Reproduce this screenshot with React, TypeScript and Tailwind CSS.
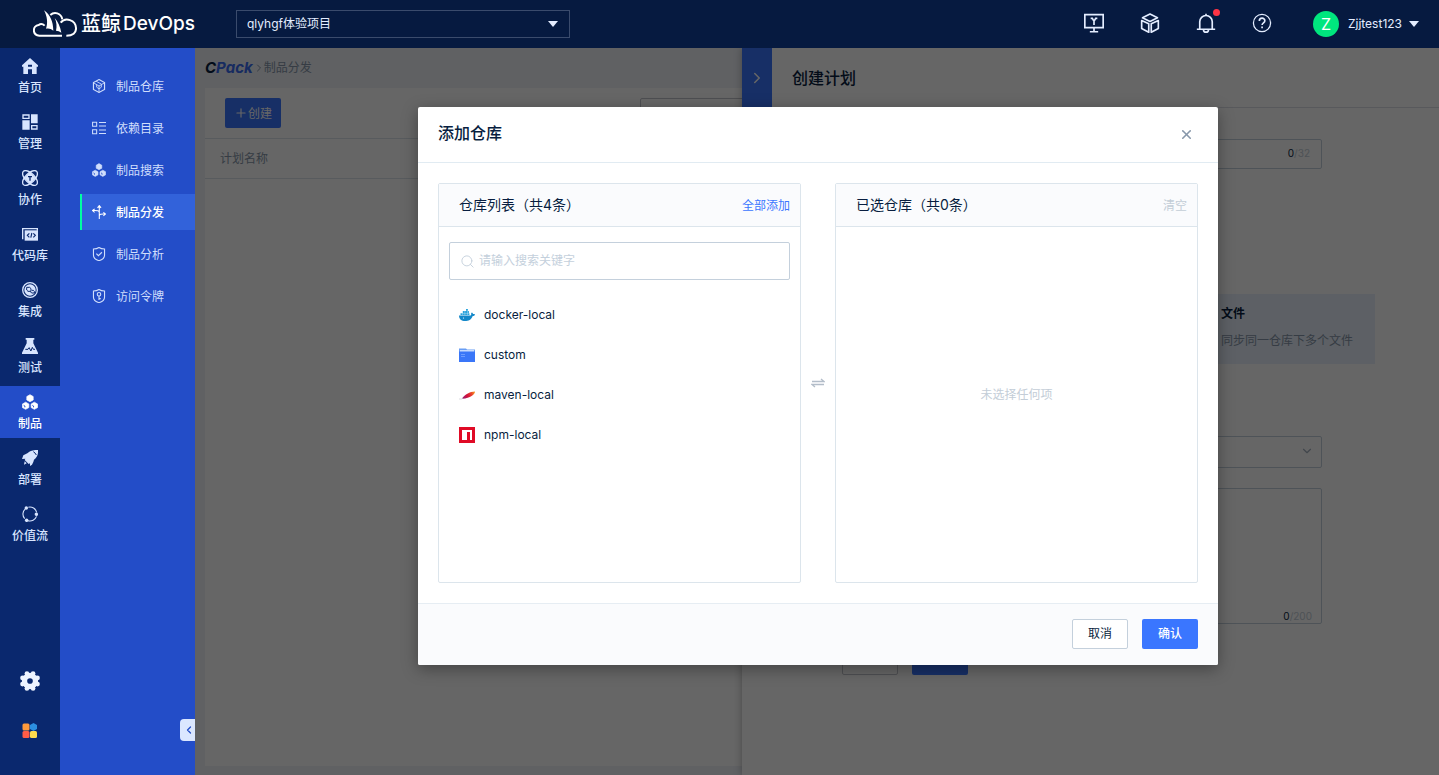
import { useState } from 'react';
import type { ReactNode } from 'react';
import clsx from 'clsx';
import { ChevronDown, ChevronLeft, ChevronRight, Plus, Search, X } from 'lucide-react';

function Svg({ size = 16, box = 24, className, children }: { size?: number; box?: number; className?: string; children: ReactNode }) {
  return (
    <svg width={size} height={size} viewBox={`0 0 ${box} ${box}`} fill="none" stroke="currentColor" strokeWidth={1.5} className={className} aria-hidden="true">
      {children}
    </svg>
  );
}

/* Three hexagons, shared by the main nav and the sub menu */
const hexagons = (
  <g>
    <g fill="currentColor" strokeWidth={1} strokeLinejoin="round">
      <path d="M12 1l4.800 2.800v5.200L12 11.500 7.200 9V3.800z" />
      <path d="M5.500 12.300l4.800 2.800v5.200l-4.800 2.700-4.900-2.700v-5.200z" />
      <path d="M18.500 12.300l4.900 2.800v5.200l-4.900 2.700-4.800-2.700v-5.200z" />
    </g>
    <path stroke="#234dc8" strokeWidth={1.4} d="M2.500 17l1.800 1v2M15.500 17l1.800 1v2" />
  </g>
);

const mainNav = [
  {
    name: '首页',
    icon: <path fill="currentColor" stroke="none" fillRule="evenodd" d="M12 0L24 11v2h-2v11h-7v-7H9v7H2V13H0v-2zM9 10v3h6v-3z" />,
  },
  {
    name: '管理',
    icon: (
      <g>
        <path strokeWidth={2} d="M1.500 1.500h9v5h-9zM14.500 17.500h8v5h-8z" />
        <path fill="currentColor" stroke="none" d="M13.500.5h10v13.500h-10zM.5 9.500h11v14H.5z" />
      </g>
    ),
  },
  {
    name: '协作',
    icon: (
      <g>
        <ellipse cx="12" cy="12" rx="14" ry="7" transform="rotate(45 12 12)" strokeWidth={2} />
        <ellipse cx="12" cy="12" rx="14" ry="7" transform="rotate(-45 12 12)" strokeWidth={2} />
        <path fill="currentColor" stroke="none" d="M12 3l8.500 9-8.500 9-8.500-9z" />
        <path stroke="#0a286e" strokeWidth={2} d="M9 10h6M12 10v6" />
      </g>
    ),
  },
  {
    name: '代码库',
    icon: (
      <g>
        <path strokeWidth={2} d="M1 20V4h22v3" />
        <path fill="currentColor" stroke="none" d="M4 6.500h20V22H4z" />
        <path stroke="#0a286e" strokeWidth={1.7} d="M11 11l-3 3 3 3M17 11l3 3-3 3M14.800 10.500l-1.600 7" />
      </g>
    ),
  },
  {
    name: '集成',
    icon: (
      <g>
        <circle cx="12" cy="12" r="11" strokeWidth={2} />
        <circle cx="12" cy="12" r="8.500" fill="currentColor" stroke="none" />
        <path stroke="#0a286e" strokeWidth={1.500} d="M7 8h4.500l2 2v4H9l-2-2zM15 12.500h2l1.500 1.500v2.500h-4L13 15" />
      </g>
    ),
  },
  {
    name: '测试',
    icon: (
      <g>
        <path fill="currentColor" stroke="none" d="M5.500 0h13v2.500H17V8l7 14v2H0v-2L7 8V2.500H5.500z" />
        <path stroke="#0a286e" strokeWidth={1.500} d="M5 17h4l1.800-2.500 2.500 5L15.500 14l1.500 3h2.500" />
      </g>
    ),
  },
  { name: '制品', icon: hexagons },
  {
    name: '部署',
    icon: (
      <g fill="currentColor" stroke="none">
        <path d="M24 0c.5 6-1 11-6 14.500L17 18l-2 4-3 2v-4l-2 1-6-6 1-2-5 .5 2-5.500 6-3 3-2.500C13.500 1 18 0 24 0z" />
        <path d="M4 17l3 3-4 2z" />
        <path stroke="#0a286e" strokeWidth={1.500} fill="none" d="M17 2.500c2 1 3.500 3 4.500 5" />
      </g>
    ),
  },
  {
    name: '价值流',
    icon: (
      <g>
        <path strokeWidth={1.600} d="M4 19A10.500 10.500 0 0 1 5 4.200M9.500 1.800A10.500 10.500 0 0 1 22 9.500M21.800 15.500A10.500 10.500 0 0 1 9 22" />
        <circle cx="6.500" cy="3" r="2.600" fill="currentColor" stroke="none" />
        <circle cx="21.500" cy="12.500" r="2.600" fill="currentColor" stroke="none" />
        <circle cx="7" cy="21.500" r="2.600" fill="currentColor" stroke="none" />
      </g>
    ),
  },
];

const subNav = [
  {
    name: '制品仓库',
    icon: (
      <g>
        <path strokeWidth={2} d="M12 1l9.500 5v12L12 23l-9.500-5V6z" />
        <path d="M2.500 6.500L12 12l9.500-5.500M12 12v11M8 10v4l4 3 4-3v-4M7 3.800L16.500 9" />
      </g>
    ),
  },
  {
    name: '依赖目录',
    icon: <path strokeWidth={1.800} d="M1 2h7v7H1zM1 15h7v7H1zM12 2.500h12M12 8.500h12M12 15.500h12M12 21.500h12" />,
  },
  { name: '制品搜索', icon: hexagons },
  {
    name: '制品分发',
    icon: (
      <g strokeWidth={1.800}>
        <path d="M12.500 24V2M9.500 5l3-4 3 4M12.500 13c0-4-4-3.500-11-3.500M4.500 6.500l-3.500 3 3.500 3M12.500 19c0-4 4-3.500 10-3.500M19.500 12.500l3.500 3-3.500 3" />
      </g>
    ),
  },
  {
    name: '制品分析',
    icon: <path strokeWidth={1.900} d="M12 1c3 2 6 2.500 9.500 2.500V14c0 5-4.500 8-9.500 9.500C7 22 2.500 19 2.500 14V3.500C6 3.500 9 3 12 1zM7.500 11.500l3.500 3.500 6-6" />,
  },
  {
    name: '访问令牌',
    icon: (
      <g strokeWidth={1.900}>
        <path d="M12 1c3 2 6 2.500 9.500 2.500V14c0 5-4.500 8-9.500 9.500C7 22 2.500 19 2.500 14V3.500C6 3.500 9 3 12 1z" />
        <circle cx="12" cy="9" r="3" />
        <path d="M12 12v7M12 16.500h3" />
      </g>
    ),
  },
];

const headerTools = [
  {
    name: '控制台',
    icon: (
      <g strokeWidth={2}>
        <path d="M1 2h22v15.500H1zM12 17.500v4.500M7 22.500h10" />
        <path d="M8 6.500h2l2 3.500 2-3.500h2M12 10v4.500" />
      </g>
    ),
  },
  {
    name: '服务',
    icon: (
      <g strokeWidth={2} strokeLinejoin="round">
        <path d="M12 1.200l9 4.500-9 4.500-9-4.500z" />
        <path d="M2 9l8.500 4v10L2 18.500zM22 9l-8.500 4v10l8.500-4.500z" />
      </g>
    ),
  },
  {
    name: '通知',
    icon: (
      <g strokeWidth={2}>
        <path d="M4.500 19V10.500a7.500 7.500 0 0 1 15 0V19M1 19.500h22M12 3V1" />
        <path d="M9 20a3 3 0 0 0 6 0" />
      </g>
    ),
    dot: true,
  },
  {
    name: '帮助',
    icon: (
      <g>
        <circle cx="12" cy="12" r="10.300" />
        <path strokeWidth={2} d="M8.800 9.500c0-4.300 6.600-4.300 6.600-.3 0 2.600-3.300 2.500-3.300 5.300M12.100 16.200v2" />
      </g>
    ),
  },
];

const repos = [
  {
    name: 'docker-local',
    icon: (
      <Svg box={16}>
        <g stroke="none">
          <path fill="#1488c9" d="M0 8.500h11.500c.6-.2 1-1 .6-2.300l.8-.7c.6.3 1 .8 1.100 1.500.8-.1 1.500 0 2 .4-.4 1-1.200 1.500-2.300 1.500C12.500 12.500 9.500 14 6 14c-3.500 0-6-1.800-6-5.500z" />
          <path fill="#2aa3dc" d="M1.500 6.200h2v1.900h-2zM3.800 6.200h2v1.900h-2zM6.100 6.200h2v1.900h-2zM8.400 6.200h2v1.900h-2zM3.800 4h2v1.900h-2zM6.100 4h2v1.900h-2zM8.400 4h1.500v1.900H8.400zM7 2h1.900v1.800H7z" />
          <circle cx="4.500" cy="11" r="0.600" fill="#fff" />
        </g>
      </Svg>
    ),
  },
  {
    name: 'custom',
    icon: (
      <Svg box={16}>
        <g stroke="none">
          <path fill="#699df4" d="M0 1.500h7l1 1h8V6H0z" />
          <path fill="#c6dafd" d="M1 3h14v2H1z" />
          <path fill="#3a76f8" d="M0 4.500h16V15H0z" />
          <path fill="#6b9bff" d="M2 7h4v1H2zM2 9h4v1H2z" />
        </g>
      </Svg>
    ),
  },
  {
    name: 'maven-local',
    icon: (
      <Svg box={16}>
        <defs>
          <linearGradient id="feather" x1="2" y1="12" x2="16" y2="5" gradientUnits="userSpaceOnUse">
            <stop offset="0" stopColor="#7b2a8c" />
            <stop offset=".45" stopColor="#d3103b" />
            <stop offset=".75" stopColor="#e8432b" />
            <stop offset="1" stopColor="#f7a01d" />
          </linearGradient>
        </defs>
        <path stroke="none" fill="url(#feather)" d="M3 11.500C5 8 11 4.500 16 4.500c0 3-5 6.500-12.500 7.300z" />
        <path stroke="#c5c2cc" strokeWidth={0.6} d="M0 12h3l1-.8" />
      </Svg>
    ),
  },
  {
    name: 'npm-local',
    icon: (
      <Svg box={16}>
        <path stroke="none" fill="#e00b26" d="M0 0h16v16H0z" />
        <path stroke="none" fill="#fff" d="M3 3h10v10h-2V5H8v8H3z" />
      </Svg>
    ),
  },
];

function Caret() {
  return (
    <svg width="10" height="6" viewBox="0 0 10 6" fill="currentColor" aria-hidden="true">
      <path d="M0 0h10L5 6z" />
    </svg>
  );
}

function Header() {
  return (
    <header className="flex h-12 shrink-0 items-center bg-[#061a40] pr-5 pl-[33px] text-[#e4edff]">
      <a href="#home" className="flex w-[203px] items-center gap-1 text-white">
        <svg width="44" height="28" viewBox="0 0 132 84" fill="none" stroke="currentColor" strokeWidth="6" aria-hidden="true">
          <path d="M87 77H19C-3 75-2 47 17 45c6-5 12-4 18 2" />
          <path fill="currentColor" stroke="none" d="M33 1c19 14 27 33 28 61-7-6-14-8-22-6 6-16 4-37-6-55z" />
          <path fill="currentColor" stroke="none" d="M65 24c9 10 17 26 20 44-5-4-10-6-16-6 3-12 2-26-4-38z" />
          <path d="M52 15c12-11 32-6 36 13" />
          <path d="M83 38c14-18 45-8 46 16 1 15-10 23-29 23" />
        </svg>
        <span className="flex items-center gap-0.5 font-medium">
          <span className="text-xl">蓝鲸</span>
          <span className="text-[19px]">DevOps</span>
        </span>
      </a>
      <div className="relative w-[334px]">
        <select aria-label="项目" className="block h-7 w-full appearance-none border border-[#3a4b6c] bg-transparent px-2.5 text-xs">
          <option>qlyhgf体验项目</option>
        </select>
        <span className="pointer-events-none absolute top-[11px] right-3">
          <Caret />
        </span>
      </div>
      <div className="ml-auto flex items-center">
        {headerTools.map((tool) => (
          <button key={tool.name} type="button" aria-label={tool.name} className="flex h-12 w-14 items-center justify-center">
            <span className="relative -mt-0.5">
              <Svg size={20}>{tool.icon}</Svg>
              {tool.dot && <i className="absolute -top-1 -right-1 size-[7px] rounded-full bg-[#ff3445]" />}
            </span>
          </button>
        ))}
        <button type="button" className="ml-[23px] flex items-center text-xs">
          <span className="mr-[9px] flex size-[26px] items-center justify-center rounded-full bg-[#00e67e] text-base text-white">Z</span>
          Zjjtest123
          <span className="ml-[7px]">
            <Caret />
          </span>
        </button>
      </div>
    </header>
  );
}

function MainNav() {
  return (
    <nav className="flex w-15 shrink-0 flex-col gap-1 bg-[#0a286e] pt-0.5 text-xs font-medium text-[#d8e5ff]">
      {mainNav.map((item) => (
        <a
          key={item.name}
          href="#nav"
          className={clsx('flex h-13 flex-col items-center gap-1 pt-2', item.name === '制品' && 'bg-[#234dc8] text-white')}
        >
          <Svg>{item.icon}</Svg>
          <span className="leading-5">{item.name}</span>
        </a>
      ))}
      <div className="mt-auto flex flex-col items-center gap-8 pb-9 text-[#eef4ff]">
        <button type="button" aria-label="设置">
          <Svg size={20}>
            <g fill="currentColor" stroke="none">
              <circle cx="12" cy="12" r="9.800" />
              <circle cx="8.300" cy="3" r="2.800" />
              <circle cx="15.700" cy="3" r="2.800" />
              <circle cx="21" cy="8.300" r="2.800" />
              <circle cx="21" cy="15.700" r="2.800" />
              <circle cx="15.700" cy="21" r="2.800" />
              <circle cx="8.300" cy="21" r="2.800" />
              <circle cx="3" cy="15.700" r="2.800" />
              <circle cx="3" cy="8.300" r="2.800" />
              <circle cx="12" cy="12" r="3.400" fill="#0a286e" />
            </g>
          </Svg>
        </button>
        <button type="button" aria-label="应用">
          <Svg size={16} box={16}>
            <g stroke="none">
              <rect x="0.500" y="0.500" width="7" height="7" rx="1.500" fill="#ff9a3c" />
              <path fill="#2c8fe0" d="M11.500 0L15 2v4l-3.500 2L8 6V2z" />
              <rect x="0.500" y="8" width="7" height="7" rx="1.500" fill="#ff5c47" />
              <rect x="8" y="8" width="7" height="7" rx="1.500" fill="#ffdb4d" />
            </g>
          </Svg>
        </button>
      </div>
    </nav>
  );
}

function SubNav() {
  return (
    <nav className="relative flex w-[135px] shrink-0 flex-col gap-1.5 bg-[#234dc8] pt-5 pl-5 text-xs text-[#d0defc]">
      {subNav.map((item) => (
        <a
          key={item.name}
          href="#sub"
          className={clsx(
            'flex h-9 items-center gap-2.5 border-l-2 pl-2.5',
            item.name === '制品分发' ? 'border-[#00ffa2] bg-[#3262da] font-medium text-white' : 'border-transparent',
          )}
        >
          <Svg size={14}>{item.icon}</Svg>
          <span className="pt-0.5">{item.name}</span>
        </a>
      ))}
      <button type="button" aria-label="收起" className="absolute right-0 bottom-[34px] flex h-[22px] w-[15px] items-center justify-center rounded-l bg-[#dbe7ff] pl-0.5 text-[#234dc8]">
        <ChevronLeft size={12} strokeWidth={2.5} />
      </button>
    </nav>
  );
}

function PlanList() {
  return (
    <div className="flex h-full flex-col bg-[#eff2f8] px-2.5 pb-[9px]">
      <div className="flex h-10 items-center text-xs text-[#8797aa]">
        <span className="text-[15px] font-bold text-[#3a6cf0] italic">
          <span className="text-[#081e40]">C</span>Pack
        </span>
        <ChevronRight size={12} className="-mr-px" />
        <span>制品分发</span>
      </div>
      <div className="flex-1 bg-white">
        <div className="flex justify-between px-5 py-2.5">
          <button type="button" className="flex h-[30px] w-14 items-center justify-center rounded-xs bg-[#3a76ff] text-xs text-white">
            <Plus size={14} strokeWidth={2} />
            <span className="pt-0.5">创建</span>
          </button>
          <div className="flex gap-2.5">
            <input aria-label="计划名称" className="h-[30px] w-[249px] rounded-xs border border-[#c4c6cc] px-2.5" />
            <input aria-label="执行状态" className="h-[30px] w-[250px] rounded-xs border border-[#c4c6cc] px-2.5" />
            <input aria-label="启用状态" className="h-[30px] w-[250px] rounded-xs border border-[#c4c6cc] px-2.5" />
          </div>
        </div>
        <table className="w-full text-left text-xs text-[#8797aa]">
          <thead>
            <tr>
              <th className="h-10 border-y border-[#dde4eb] px-[15px] font-normal">计划名称</th>
            </tr>
          </thead>
        </table>
      </div>
    </div>
  );
}

function PlanDrawer() {
  return (
    <section className="absolute inset-y-0 right-0 w-[697px] bg-white shadow-[0_0_8px_rgba(0,0,0,0.3)]">
      <div className="flex h-15 items-center border-b border-[#dcdee5]">
        <button type="button" aria-label="关闭" className="flex h-full w-[30px] items-center justify-center bg-[#3a76ff] text-white">
          <ChevronRight size={18} />
        </button>
        <h2 className="ml-5 text-base font-medium text-[#081e40]">创建计划</h2>
      </div>
      <form className="pt-[31px] pr-16 pl-[100px] text-xs text-[#081e40]">
        <div className="relative w-[480px]">
          <input aria-label="计划名称" className="block h-[30px] w-full rounded-xs border border-[#c4d0dc] px-2.5" />
          <span className="absolute top-2 right-3 text-[10px] leading-3">
            0<span className="text-[#c3cdd7]">/32</span>
          </span>
        </div>
        <div className="mt-[125px] grid grid-cols-3 gap-2.5">
          <div className="h-[70px] bg-[#e8f0fc]" />
          <div className="h-[70px] bg-[#e8f0fc]" />
          <div className="flex h-[70px] flex-col gap-2 bg-[#e8f0fc] pt-2.5 pl-[17px]">
            <strong className="leading-5 font-bold">文件</strong>
            <span className="leading-[18px] whitespace-nowrap text-[#8797aa]">同步同一仓库下多个文件</span>
          </div>
        </div>
        <div className="relative mt-[72px] w-[480px]">
          <select aria-label="冲突策略" className="block h-8 w-full appearance-none rounded-xs border border-[#c4d0dc]" />
          <ChevronDown size={14} strokeWidth={2} className="pointer-events-none absolute top-2 right-2 text-[#a3afbd]" />
        </div>
        <div className="relative mt-5 w-[480px]">
          <textarea aria-label="描述" className="block h-[136px] w-full resize-none rounded-xs border border-[#c4d0dc]" />
          <span className="absolute right-2.5 bottom-0.5 text-[10px] leading-3">
            0<span className="text-[#c3cdd7]">/200</span>
          </span>
        </div>
        <div className="mt-[21px] flex gap-3.5">
          <button type="button" aria-label="取消" className="h-[30px] w-14 rounded-xs border border-[#c4c6cc]" />
          <button type="button" aria-label="保存" className="h-[30px] w-14 rounded-xs bg-[#3a76ff]" />
        </div>
      </form>
    </section>
  );
}

function Panel({ title, action, disabled, onAction, children }: { title: string; action: string; disabled?: boolean; onAction: () => void; children: ReactNode }) {
  return (
    <section className="flex h-100 flex-1 flex-col rounded-xs border border-[#dce5ec]">
      <div className="flex h-[43px] items-center justify-between border-b border-[#dce5ec] bg-[#fafbfd] pr-2.5 pl-5">
        <h3 className="text-sm">{title}</h3>
        <button type="button" disabled={disabled} onClick={onAction} className="pt-0.5 text-xs text-[#3a76ff] disabled:text-[#c3cdd7]">
          {action}
        </button>
      </div>
      {children}
    </section>
  );
}

function RepoDialog() {
  const [picked, setPicked] = useState<string[]>([]);
  const [keyword, setKeyword] = useState('');

  const rows = (list: typeof repos, onPick: (name: string) => void) => (
    <ul className="pt-[15px] text-xs">
      {list.map((repo) => (
        <li key={repo.name}>
          <button type="button" onClick={() => onPick(repo.name)} className="flex h-10 w-full items-center gap-[9px] px-5">
            {repo.icon}
            {repo.name}
          </button>
        </li>
      ))}
    </ul>
  );

  const rest = repos.filter((repo) => !picked.includes(repo.name));
  const chosen = repos.filter((repo) => picked.includes(repo.name));

  return (
    <div role="dialog" aria-label="添加仓库" className="w-[800px] rounded-xs bg-white text-[#081e40] shadow-[0_4px_16px_rgba(0,0,0,0.35)]">
      <div className="flex h-14 items-center justify-between border-b border-[#e1ebf2] px-5">
        <h2 className="pb-1 text-base font-medium">添加仓库</h2>
        <button type="button" aria-label="关闭" className="px-1 text-[#8797aa]">
          <X size={15} strokeWidth={2.5} />
        </button>
      </div>
      <div className="flex items-center p-5">
        <Panel title={`仓库列表（共${rest.length}条）`} action="全部添加" onAction={() => setPicked(repos.map((repo) => repo.name))}>
          <label className="mx-2.5 mt-[15px] flex h-[38px] items-center gap-1 rounded-xs border border-[#c4d0dc] px-2.5 text-[#c4d0dc]">
            <Search size={15} strokeWidth={1.5} />
            <input
              value={keyword}
              onChange={(e) => setKeyword(e.target.value)}
              placeholder="请输入搜索关键字"
              className="min-w-0 flex-1 text-xs text-[#081e40] outline-none placeholder:text-[#c4d0dc]"
            />
          </label>
          {rows(rest.filter((repo) => repo.name.includes(keyword)), (name) => setPicked([...picked, name]))}
        </Panel>
        <div className="flex w-[34px] justify-center text-[#b3bdc9]">
          <Svg size={14} box={14}>
            <path d="M1 5.500h12L10 3M13 8.500H1L4 11" strokeWidth={1.300} />
          </Svg>
        </div>
        <Panel title={`已选仓库（共${chosen.length}条）`} action="清空" disabled={!chosen.length} onAction={() => setPicked([])}>
          {chosen.length ? (
            rows(chosen, (name) => setPicked(picked.filter((p) => p !== name)))
          ) : (
            <p className="flex flex-1 items-center justify-center pb-5 text-xs text-[#c3cdd7]">未选择任何项</p>
          )}
        </Panel>
      </div>
      <div className="flex justify-end gap-3.5 rounded-b-xs border-t border-[#e6edf3] bg-[#fafbfd] px-5 pt-[15px] pb-4 text-xs">
        <button type="button" className="h-[30px] w-14 rounded-xs border border-[#c4d0dc] bg-white">
          取消
        </button>
        <button type="button" className="h-[30px] w-14 rounded-xs bg-[#3a76ff] font-medium text-white">
          确认
        </button>
      </div>
    </div>
  );
}

export default function App() {
  return (
    <div className="flex h-screen flex-col font-[Inter,'Noto_Sans_CJK_SC',sans-serif]">
      <Header />
      <div className="flex min-h-0 flex-1">
        <MainNav />
        <SubNav />
        <main className="relative min-w-0 flex-1 overflow-hidden">
          <PlanList />
          <PlanDrawer />
          <div className="absolute inset-0 flex items-start justify-center bg-black/60 pt-[59px] pl-0.5">
            <RepoDialog />
          </div>
        </main>
      </div>
    </div>
  );
}
